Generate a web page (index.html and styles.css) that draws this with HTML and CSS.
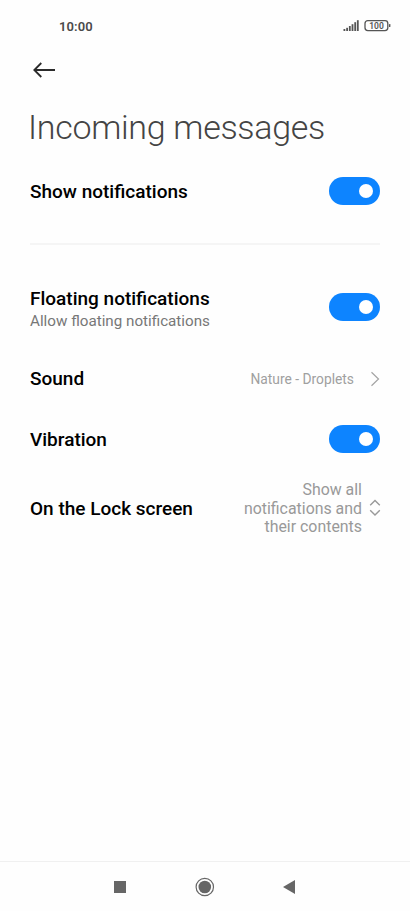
FILE: index.html
```html
<!DOCTYPE html>
<html lang="en">
<head>
<meta charset="utf-8">
<title>Incoming messages</title>
<link rel="stylesheet" href="styles.css">
</head>
<body>
<div class="screen">
  <header class="status">
    <span class="time">10:00</span>
    <svg class="status-icons" width="48" height="14" viewBox="0 0 48 14">
      <g fill="#555"><rect x="0.5" y="10" width="1.8" height="2"/><rect x="3.2" y="8.8" width="1.8" height="3.2"/><rect x="5.9" y="7" width="1.8" height="5"/><rect x="8.6" y="5.2" width="1.8" height="6.8"/><rect x="11.3" y="3.2" width="1.8" height="8.8"/><rect x="13.9" y="1.2" width="1.8" height="10.8"/></g>
      <rect x="22" y="1.6" width="22.8" height="10" rx="2.8" fill="none" stroke="#555" stroke-width="1.3"/>
      <rect x="46" y="5" width="1.4" height="3" rx=".6" fill="#555"/>
      <text x="33.5" y="9.7" text-anchor="middle" class="charge">100</text>
    </svg>
  </header>
  <nav class="toolbar">
    <svg width="24" height="18" viewBox="0 0 24 18" fill="none" stroke="#2b2b2b" stroke-width="1.8"><path d="M23 9H2M9.3 2 2.3 9l7 7"/></svg>
  </nav>
  <h1 class="title">Incoming messages</h1>
  <main class="settings">
    <section class="row row-show">
      <span class="label">Show notifications</span>
      <span class="switch"></span>
    </section>
    <hr class="divider">
    <section class="row row-floating">
      <div class="texts">
        <div class="label">Floating notifications</div>
        <div class="hint">Allow floating notifications</div>
      </div>
      <span class="switch"></span>
    </section>
    <section class="row row-sound">
      <span class="label">Sound</span>
      <span class="value">Nature - Droplets</span>
      <svg class="chevron" width="10" height="16" viewBox="0 0 10 16" fill="none" stroke="#a4a4a4" stroke-width="1.2"><path d="m1.5 1.3 7 6.7-7 6.7"/></svg>
    </section>
    <section class="row row-vibration">
      <span class="label">Vibration</span>
      <span class="switch"></span>
    </section>
    <section class="row row-lock">
      <span class="label">On the Lock screen</span>
      <span class="value value-large">Show all<br>notifications and<br>their contents</span>
      <svg class="updown" width="12" height="18" viewBox="0 0 12 18" fill="none" stroke="#999" stroke-width="1.4"><path d="M1.2 6.2 6 1.4l4.8 4.8M1.2 11.2 6 16l4.8-4.8"/></svg>
    </section>
  </main>
  <footer class="navbar">
    <svg width="12" height="12" viewBox="0 0 12 12"><rect width="12" height="12" fill="#666"/></svg>
    <svg width="20" height="20" viewBox="0 0 20 20"><circle cx="9.8" cy="10" r="8.7" fill="none" stroke="#666" stroke-width="1.2"/><circle cx="9.8" cy="10" r="6.3" fill="#666"/></svg>
    <svg width="12" height="14" viewBox="0 0 12 14"><path d="M12 0v14L0 7z" fill="#666"/></svg>
  </footer>
</div>
</body>
</html>
```
FILE: styles.css
```css
* { box-sizing: border-box; }
body {
  margin: 0;
  background: #fefefe;
  font-family: Roboto, "Liberation Sans", sans-serif;
  color: #000;
}
svg { display: block; flex: none; }
.screen {
  display: flex;
  flex-direction: column;
  height: 911px;
  overflow: hidden;
}
.status {
  display: flex;
  justify-content: space-between;
  align-items: center;
  height: 52px;
  padding: 0 19px 0 59px;
}
.time {
  font-size: 13px;
  font-weight: 600;
  letter-spacing: .1px;
  color: #4a4a4a;
}
.charge { font-size: 8.5px; font-weight: 600; fill: #555; }
.toolbar {
  display: flex;
  align-items: center;
  height: 36px;
  padding-left: 32px;
}
.title {
  margin: 16px 0 0 28px;
  font-size: 34px;
  font-weight: 300;
  line-height: 46px;
  letter-spacing: -.3px;
  white-space: nowrap;
  color: #444;
}
.settings {
  flex: 1;
  padding: 0 30px;
}
.row {
  display: flex;
  align-items: center;
}
.row-show { height: 82px; }
.row-show .label { padding-top: 1px; }
.row-floating { height: 102px; margin-top: 11px; }
.row-sound { height: 41px; }
.row-vibration { height: 79px; }
.row-vibration .label { padding-top: 2px; }
.row-lock { height: 60px; margin-top: 1px; }
.label {
  font-size: 19px;
  font-weight: 500;
  line-height: 24px;
  white-space: nowrap;
}
.hint {
  font-size: 15.2px;
  line-height: 20px;
  white-space: nowrap;
  color: #777;
}
.texts { padding-top: 4px; }
.switch {
  display: flex;
  align-items: center;
  justify-content: flex-end;
  width: 51px;
  height: 28px;
  margin-left: auto;
  padding-right: 7px;
  border-radius: 14px;
  background: #0d84ff;
}
.switch::before {
  content: "";
  width: 14px;
  height: 14px;
  border-radius: 50%;
  background: #fff;
}
.divider {
  height: 2px;
  margin: 11px 0 0;
  border: 0;
  background: #f5f5f5;
}
.value {
  margin-left: auto;
  font-size: 13.8px;
  text-align: right;
  white-space: nowrap;
  color: #a0a0a0;
}
.value-large {
  font-size: 15.9px;
  line-height: 18.7px;
  color: #999;
}
.chevron { margin-left: 16px; }
.updown { margin: 0 -1px 2px 7px; }
.navbar {
  display: flex;
  justify-content: space-between;
  align-items: center;
  height: 50px;
  padding: 0 115px 0 114px;
  border-top: 1px solid #f0f0f0;
}
```
